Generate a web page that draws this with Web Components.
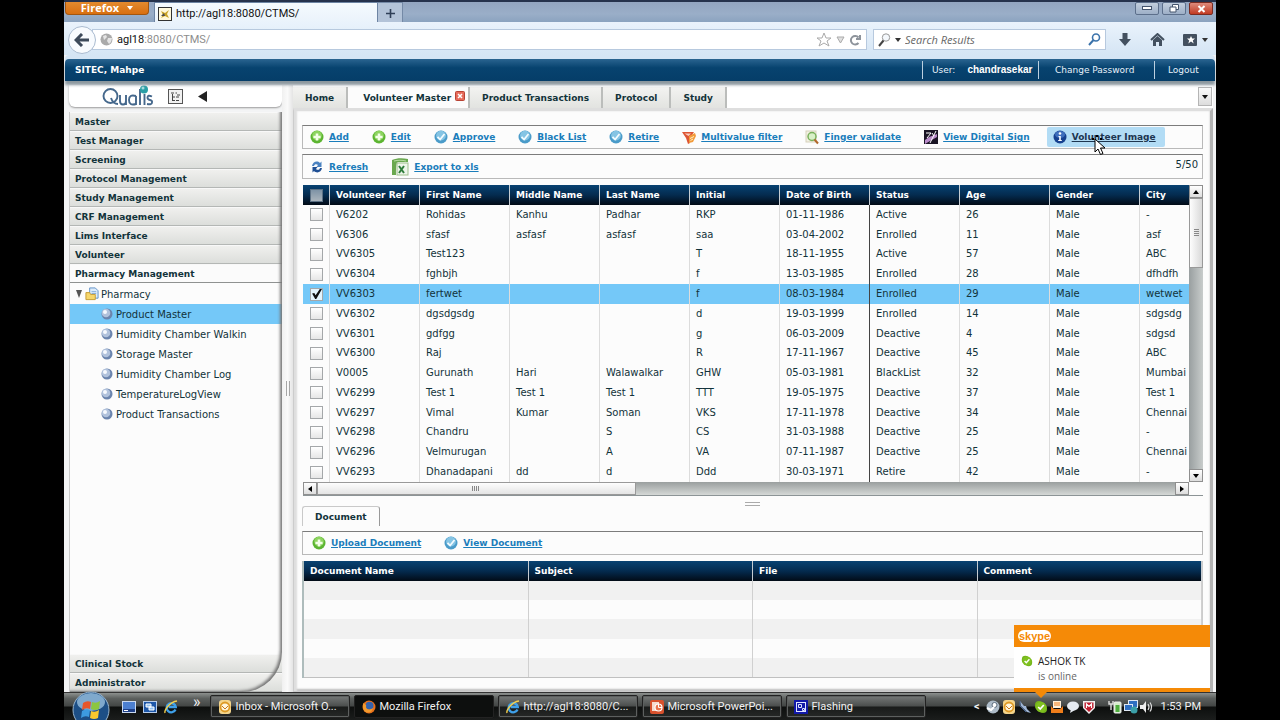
<!DOCTYPE html>
<html lang="en">
<head>
<meta charset="utf-8">
<title>CTMS - Volunteer Master</title>
<style>
  html, body { height: 100%; margin: 0; }
  body { background: #000; font-family: "DejaVu Sans", Verdana, sans-serif; font-size: 10px; color: #12333a; overflow: hidden; }
</style>
</head>
<body>
<desktop-screen></desktop-screen>
<script>
const ICONS = {
  add: `<svg viewBox="0 0 14 14"><circle cx="7" cy="7" r="6.5" fill="#5cb531"/><circle cx="7" cy="5.500" r="4.800" fill="#8dd45f"/><path d="M5.700 3.500h2.600v2.300h2.300v2.500H8.300v2.300H5.700V8.300H3.400V5.800h2.300z" fill="#f4ffe9"/></svg>`,
  check: `<svg viewBox="0 0 14 14"><circle cx="7" cy="7" r="6.500" fill="#4a9bc9"/><circle cx="7" cy="5.600" r="4.900" fill="#85c4e4"/><path d="M3.500 6.800l2.600 2.700L10.500 4" fill="none" stroke="#f3fbff" stroke-width="1.800"/></svg>`,
  filter: `<svg viewBox="0 0 14 14"><path d="M0 2h12L8 8v5l-2 1-2-6z" fill="#dd5534"/><path d="M2.500 3.500h6.500L6.500 6z" fill="#fbd0c2"/><path d="M7 6l6-3 1 3-3 6-4 1z" fill="#f29a3a"/><path d="M8 8.500l4-2M8.500 10.500l2.500-1.500" stroke="#fff0c8"/></svg>`,
  finger: `<svg viewBox="0 0 14 14"><rect x="1" y="1" width="10" height="11" fill="#f2f0e2" stroke="#d6d1bb"/><circle cx="7" cy="6.500" r="4" fill="#d9f0c7" stroke="#7ab15c" stroke-width="1.500"/><path d="M9.500 9.500l3.500 4" stroke="#b1682c" stroke-width="2"/></svg>`,
  sign: `<svg viewBox="0 0 14 14"><rect width="14" height="14" fill="#1a1424"/><path d="M1 10l4-3 8-3v3L6 11l-5 3z" fill="#b98bc9"/><path d="M2 3h5L3 8M8 3l2 3M12 1L6 13" stroke="#fff" fill="none"/></svg>`,
  info: `<svg viewBox="0 0 14 14"><circle cx="7" cy="7" r="6.500" fill="#17418f"/><ellipse cx="7" cy="4.500" rx="5" ry="3.500" fill="#3f6fbd"/><circle cx="7" cy="3.500" r="1.300" fill="#fff"/><path d="M5.500 6h2.300v4h1v1h-3.600v-1h1V7h-.7z" fill="#fff"/></svg>`,
  refresh: `<svg viewBox="0 0 14 14"><path d="M2 6c.5-4 5-6 8-3l1.500-1.500V7H6.500L8 5C6.500 3.500 4.500 4 4 6z" fill="#4b82c0"/><path d="M12 8c-.5 4-5 6-8 3l-1.500 1.500V7H7.500L6 9c1.500 1.500 3.500 1 4-1z" fill="#1f4f94"/></svg>`,
  excel: `<svg viewBox="0 0 18 18"><path d="M1 2C6 0 11 0 17 1v3H7C5 5 5 9 5 17H1z" fill="#6aa84f"/><path d="M3 3c4-1 8-1 12 0" stroke="#b5dca0" fill="none"/><rect x="6" y="5" width="11" height="12" fill="#eef5ea" stroke="#9dbf8c"/><path d="M8 8l5 7M13 8l-5 7" stroke="#2f7d3b" stroke-width="2"/></svg>`,
  folder: `<svg viewBox="0 0 15 15"><path d="M5 1h6l3 3v8H5z" fill="#dcebfa" stroke="#5c8fc7"/><path d="M7 5h5M7 7h5" stroke="#7fa8d6"/><path d="M1 6h4l1 2h5v5.500H1z" fill="#f6d66b" stroke="#c49a32"/></svg>`,
  ball: `<svg viewBox="0 0 12 12"><circle cx="6" cy="6" r="5.500" fill="#6b84ad"/><circle cx="5" cy="5" r="4.300" fill="#b1c2dc"/><circle cx="4" cy="4" r="2" fill="#f6f9fe"/></svg>`,
  ie: `<svg viewBox="0 0 14 14"><path d="M11.500 9.500A4.600 4.600 0 1 1 11.800 7H4.500" fill="none" stroke="#3fa1ea" stroke-width="2.300"/><path d="M1 13C0 10 6 2 13 1" fill="none" stroke="#f3cf4e" stroke-width="1.400"/></svg>`,
  outlook: `<svg viewBox="0 0 14 14"><rect x="1" y="0" width="12" height="14" rx="3" fill="#f4d58c"/><circle cx="7" cy="7" r="4.500" fill="#fff6dd" stroke="#de9a25" stroke-width="1.800"/><path d="M4 6l3 3 3-3" stroke="#c8791b" fill="none"/></svg>`,
  firefox: `<svg viewBox="0 0 14 14"><circle cx="7" cy="7" r="6.500" fill="#e8701a"/><circle cx="7.500" cy="5.800" r="4" fill="#3463ad"/><path d="M1 3c2 1 4 2 3 4 0 3 5 3 7 1-1 6-9 6-10 0z" fill="#f29a2e"/></svg>`,
  ppt: `<svg viewBox="0 0 14 14"><rect width="14" height="14" rx="2" fill="#d8512d"/><rect x="2" y="2" width="7" height="9" fill="#f7d9cd"/><circle cx="8.500" cy="7.500" r="3.500" fill="#e9744f" stroke="#fff" stroke-width="1.200"/><path d="M8.500 4v3.500H12" stroke="#fff" fill="none"/></svg>`,
  flash: `<svg viewBox="0 0 14 14"><rect width="14" height="14" fill="#1118a8"/><rect x="2.500" y="2.500" width="9" height="9" fill="none" stroke="#dfe3ff"/><path d="M4.500 4.500h3v3h-3zM8.500 8.500h2v2h-2z" fill="none" stroke="#dfe3ff"/></svg>`,
  desktop: `<svg viewBox="0 0 14 14"><rect x=".5" y="1.500" width="13" height="11" fill="#4c7fd0" stroke="#c9d8ee"/><path d="M1 9h12v3H1z" fill="#1e3f87"/><path d="M2 10.500h4" stroke="#fff"/></svg>`,
  windows: `<svg viewBox="0 0 14 14"><rect x=".5" y="1.500" width="13" height="11" fill="#1d57a8" stroke="#b8cdea"/><path d="M3 4h5v3H3zM6 7h5v3H6z" fill="#8fc0f2" stroke="#fff"/></svg>`,
  steam: `<svg viewBox="0 0 14 14"><circle cx="7" cy="7" r="6.500" fill="#aebcc9"/><circle cx="8.500" cy="5" r="2.500" fill="#fff" stroke="#5c6c7c"/><path d="M1 8l4 2 3-3" stroke="#fff" stroke-width="2" fill="none"/></svg>`,
  plug: `<svg viewBox="0 0 14 14"><path d="M2 1l4 5 2 0 1 3 4 4-4-1-3-3-3-3z" fill="#9fb6d6"/><path d="M2 1v5l6 6" stroke="#46638e" fill="none"/></svg>`,
  skype: `<svg viewBox="0 0 14 14"><rect x="1" y="1" width="8" height="9" rx="4" fill="#74b41c"/><rect x="5" y="4" width="8" height="9" rx="4" fill="#74b41c"/><circle cx="7" cy="7" r="5.300" fill="#7fc01f"/><path d="M4.200 7l2 2 3.600-4" stroke="#fff" stroke-width="1.700" fill="none"/></svg>`,
  mail: `<svg viewBox="0 0 14 14"><path d="M3 1h8v7H3z" fill="#fff1dc"/><path d="M1 6l3 3h6l3-3v7H1z" fill="#ef7d1a"/><path d="M4 3h6M4 5h6" stroke="#ef7d1a"/></svg>`,
  bubble: `<svg viewBox="0 0 14 14"><ellipse cx="7" cy="6" rx="6" ry="4.500" fill="#e6ebf1"/><path d="M5 9l-1 4 5-3z" fill="#e6ebf1"/></svg>`,
  shield: `<svg viewBox="0 0 14 14"><path d="M1 1h12v7l-6 6-6-6z" fill="#f1f1f1"/><path d="M2.500 2.500h9v5L7 12 2.500 7.500z" fill="#c01d2e"/><path d="M4.500 8V4L7 6.500 9.500 4v4" stroke="#fff" fill="none" stroke-width="1.200"/></svg>`,
  battery: `<svg viewBox="0 0 14 14"><rect x="6" y="2" width="7" height="11" rx="1" fill="#d6eccd" stroke="#eee"/><rect x="7.500" y="5" width="4" height="7" fill="#4fae3f"/><path d="M1 1v3h4V1M3 4v6" stroke="#ddd" fill="none" stroke-width="1.400"/></svg>`,
  network: `<svg viewBox="0 0 14 14"><rect x="4.500" y=".5" width="9" height="7" fill="#2f6fc2" stroke="#dfe8f4"/><rect x=".5" y="4.500" width="8" height="6" fill="#2f6fc2" stroke="#dfe8f4"/><circle cx="10" cy="10" r="3.500" fill="#3ba0a8"/></svg>`,
  sound: `<svg viewBox="0 0 14 14"><path d="M0 5h3l3-4v12L3 9H0z" fill="#eee"/><path d="M8 4q2 3 0 6M10 2.500q3 4.500 0 9" stroke="#ddd" fill="none" stroke-width="1.200"/></svg>`,
  cursor: `<svg viewBox="0 0 14 20"><path d="M1 3v13l3-3 2.500 5.500 2.500-1L6.500 12H11z" fill="#fff" stroke="#000"/><path d="M2-1h2v2H2zM-2 2h2v2h-2zM6 2h2v2H6z" fill="#000"/></svg>`
};
const BASE = `<style>*{box-sizing:border-box} svg{display:block} a{color:inherit} button,input{font:inherit;color:inherit;margin:0;padding:0;border:0;background:none}</style>`;

function define(name, html) {
  customElements.define(name, class extends HTMLElement {
    constructor() {
      super();
      this.attachShadow({ mode: "open" }).innerHTML = BASE + html;
    }
  });
}

customElements.define("ui-icon", class extends HTMLElement {
  connectedCallback() {
    if (this.shadowRoot) return;
    this.attachShadow({ mode: "open" }).innerHTML =
      `<style>:host{display:block;flex:none;width:14px;height:14px} svg{display:block;width:100%;height:100%;overflow:visible}</style>${ICONS[this.getAttribute("name")] || ""}`;
  }
});

define("tool-link", `
<style>
  :host { display: block; position: relative; font-weight: bold; font-size: 9px; color: #1a7dbb; white-space: nowrap; }
  a { display: flex; align-items: center; gap: 5px; height: 20px; padding: 0 6px; text-decoration: none; border-radius: 2px; }
  span { text-decoration: underline; text-underline-offset: 1px; }
  :host([hovered]) a { background: #b2dcf5; color: #1c3550; padding-right: 9px; }
</style>
<a href="#"><slot name="icon"></slot><span><slot></slot></span></a><slot name="over"></slot>`);

define("tool-bar", `
<style>
  :host { display: flex; align-items: center; gap: 11px; height: 24px; padding: 0 4px 0 1px; background: #fcfcfc; border: 1px solid #b9b9b9; border-top-color: #7c7c7c; box-sizing: border-box; flex: none; }
</style><slot></slot>`);

define("browser-titlebar", `
<style>
  :host { display: flex; align-items: flex-start; height: 22px; flex: none; background: linear-gradient(#93a5c0, #9aaec8 60%, #8ba3bf); border-top: 2px solid #26324c; font-family: "Open Sans", sans-serif; font-size: 11px; color: #111; }
  .fx { width: 84px; height: 13px; margin-left: 1px; background: linear-gradient(#e38a2f, #d96f10); border: 1px solid #a3560f; border-top: 0; border-radius: 0 0 4px 4px; color: #fff; font-weight: bold; line-height: 10px; display: flex; justify-content: center; align-items: center; gap: 8px; }
  .fx i { border: 3px solid transparent; border-top: 4px solid #fff; border-bottom: 0; }
  .tab { display: flex; align-items: center; gap: 4px; width: 224px; height: 22px; margin-left: 5px; padding: 0 3px; background: linear-gradient(#f5fafe, #e9f2fb); border: 1px solid #6d84a3; border-bottom: 0; font-family: Roboto, sans-serif; }
  .plus { width: 25px; height: 22px; background: #b3c3d8; border: 1px solid #7489a6; border-left: 0; display: grid; place-items: center; }
  .win { margin-left: auto; display: flex; gap: 3px; margin-right: 3px; }
  .win button { width: 24px; height: 13px; border: 1px solid #5c6f8b; border-radius: 2px; background: linear-gradient(#c2cedd, #9dafc7); display: grid; place-items: center; }
  .win .x { background: linear-gradient(#dd8b7c, #c23a22); border-color: #7a2c22; }
</style>
<button class="fx">Firefox<i></i></button>
<div class="tab"><svg width="14" height="14" viewBox="0 0 14 14"><rect x=".5" y=".5" width="13" height="13" fill="#fff8dc" stroke="#333"/><path d="M3 4l4 2 4-3-2 4 2 4-4-2-4 2 2-3z" fill="#c9a227"/><path d="M3 9l3-3 1 3z" fill="#4c4c4c"/></svg>http://agl18:8080/CTMS/</div>
<button class="plus" aria-label="New tab"><svg width="9" height="9"><path d="M4.500 0v9M0 4.500h9" stroke="#2f3f57" stroke-width="1.600"/></svg></button>
<div class="win">
  <button aria-label="Minimize"><svg width="10" height="5"><rect x=".5" y=".5" width="9" height="3" fill="#fff" stroke="#44546d"/></svg></button>
  <button aria-label="Restore"><svg width="11" height="9"><path d="M3.500 .5h6v5h-6z" fill="#fff" stroke="#44546d"/><path d="M1 3h6v5H1z" fill="#fff" stroke="#44546d"/></svg></button>
  <button class="x" aria-label="Close"><svg width="9" height="8"><path d="M1.500 1l6 6M7.500 1l-6 6" stroke="#fff" stroke-width="2"/></svg></button>
</div>`);

define("browser-nav", `
<style>
  :host { display: flex; align-items: center; height: 33px; flex: none; padding: 2px 8px 0 4px; background: linear-gradient(#eaf3fc, #d5e5f4); font-family: "Open Sans", sans-serif; font-size: 11px; }
  .back { width: 28px; height: 28px; border-radius: 50%; background: #f8fbfe; border: 1px solid #aabbd0; display: grid; place-items: center; position: relative; flex: none; }
  .box { display: flex; align-items: center; height: 21px; background: #fff; border: 1px solid #b7c9de; }
  .url { flex: 1; margin-left: -4px; padding: 0 5px 0 7px; gap: 4px; }
  .url label { display: flex; flex: 1; color: #8d8d8d; font-family: Roboto, sans-serif; }
  .url b { font-weight: normal; color: #111; }
  .search { width: 233px; margin-left: 6px; padding: 0 4px; gap: 4px; }
  input { flex: 1; min-width: 0; font-style: italic; color: #666; outline: none; }
  input::placeholder { color: #666; opacity: 1; }
  .tri { border: 3px solid transparent; border-top: 4px solid #333; border-bottom: 0; }
  .acts { display: flex; align-items: center; margin-left: 12px; gap: 18px; }
  .acts span { display: flex; align-items: center; gap: 4px; }
</style>
<button class="back" aria-label="Back"><svg width="16" height="14"><path d="M8 1L2 7l6 6M2 7h13" stroke="#3d4a5a" stroke-width="3" fill="none"/></svg></button>
<div class="box url">
  <svg width="13" height="13"><circle cx="6.500" cy="6.500" r="6" fill="#aaa"/><path d="M3 3l3-1 1 2-3 3zM8 5l4 0-1 4-2 2-2-3z" fill="#e5e5e5"/></svg>
  <label><b>agl18</b>:8080/CTMS/</label>
  <svg width="16" height="15" viewBox="0 0 16 15"><path d="M8 1l2 5h5l-4 3 2 5-5-3-5 3 2-5-4-3h5z" fill="#fff" stroke="#aaa"/></svg>
  <svg width="9" height="8"><path d="M1 1h7L4.500 7z" fill="#e0e0e0" stroke="#aaa"/></svg>
  <svg width="12" height="12"><path d="M9.500 9A4.300 4.300 0 1 1 9.500 3.500M11 1v4H7" fill="none" stroke="#8d939b" stroke-width="2"/></svg>
</div>
<div class="box search">
  <svg width="13" height="14"><circle cx="8" cy="4.500" r="3.700" fill="#f4f8fc" stroke="#999"/><path d="M5.500 7.500L1 13" stroke="#444" stroke-width="2"/></svg><i class="tri"></i>
  <input type="text" aria-label="Search" placeholder="Search Results">
  <svg width="13" height="13"><circle cx="8" cy="4.500" r="3.500" fill="none" stroke="#3b73ab" stroke-width="1.600"/><path d="M5.500 7L1 12" stroke="#3b73ab" stroke-width="2"/></svg>
</div>
<div class="acts">
  <svg width="14" height="14"><path d="M4.500 0h5v6H13L7 13 1 6h3.500z" fill="#43505f"/></svg>
  <svg width="15" height="13"><path d="M1 7l6.500-6L14 7" stroke="#43505f" stroke-width="2" fill="none"/><path d="M3 7l4.500-4L12 7v6H9V9H6v4H3z" fill="#43505f"/></svg>
  <span><svg width="15" height="13"><rect y="1" width="14" height="12" rx="1" fill="#43505f"/><path d="M8 3l1.200 2.600H12L9.800 7.400l.9 3L8 8.600l-2.700 1.800.9-3L4 5.600h2.800z" fill="#fff"/></svg><i class="tri"></i></span>
</div>`);

define("app-header", `
<style>
  :host { display: flex; align-items: center; height: 22px; flex: none; margin: 4px 1px 0; background: linear-gradient(#2a6490, #07436f 40%, #053d68); border-radius: 4px 4px 0 0; color: #e6f1fa; font-size: 9px; padding-left: 10px; box-shadow: 0 4px 3px #8b979e, 0 -4px 0 #d5e5f4; position: relative; }
  b { color: #fff; }
  nav { margin-left: auto; display: flex; }
  nav > * { height: 18px; line-height: 18px; border-left: 1px solid #bcd0e0; text-decoration: none; }
  .u { width: 116px; padding-left: 9px; display: flex; gap: 12px; }
  .u b { font-family: "Liberation Sans", sans-serif; font-size: 10px; }
  .p { width: 116px; padding-left: 16px; } .l { width: 61px; padding-left: 13px; }
</style>
<b>SITEC, Mahpe</b>
<nav><span class="u">User: <b>chandrasekar</b></span><a class="p" href="#">Change Password</a><a class="l" href="#">Logout</a></nav>`);

const TREE = ["Product Master", "Humidity Chamber Walkin", "Storage Master", "Humidity Chamber Log", "TemperatureLogView", "Product Transactions"];
const heads = list => list.map(t => `<button class="h${t === "Pharmacy Management" ? " open" : ""}">${t}</button>`).join("");
define("side-menu", `
<style>
  :host { display: flex; flex-direction: column; width: 213px; flex: none; gap: 5px; }
  .logo { height: 22px; flex: none; display: flex; align-items: center; gap: 14px; padding-left: 33px; background: #fff; border-radius: 0 0 6px 6px; box-shadow: 0 1px 2px #9a9a9a; }
  .acc { flex: 1; display: flex; flex-direction: column; position: relative; background: #fcfcfc; min-height: 0; border-left: 1px solid #c9c9c9; }
  .acc::after { content: ""; position: absolute; inset: 0; border-radius: 0 0 40px 0; box-shadow: inset -3px -2px 3px -1px #777; pointer-events: none; }
  .h { height: 19px; flex: none; text-align: left; padding-left: 5px; font-size: 9px; font-weight: bold; background: linear-gradient(#f0f0ee, #dcdedb); border-top: 1px solid #f8f8f8; border-bottom: 1px solid #b4b7b5; }
  .open { background: #fbfbfb; border-bottom-color: #8f9291; }
  .tree { flex: 1; padding-top: 1px; min-height: 0; }
  .tree ul { margin: 0; padding: 0; list-style: none; }
  .row { display: flex; align-items: center; height: 20px; padding-left: 5px; gap: 2px; }
  ul a { display: flex; align-items: center; height: 20px; gap: 3px; padding-left: 31px; text-decoration: none; }
  ul a ui-icon { width: 12px; height: 12px; }
  ul a[aria-current] { background: #74c8f8; }
</style>
<div class="logo">
  <svg width="52" height="22" viewBox="0 0 52 22" role="img" aria-label="Qualis"><g fill="none" stroke="#45688c" stroke-width="1.900"><ellipse cx="8.500" cy="11" rx="7" ry="7"/><path d="M9 13q2 6 7 6M18 10v6q0 3.500 3 3.500t3-3.500V10v10M34 11q-7-2-7 4t7 4v-8v9M38 4v16M42.500 9v11M50 11.500q-4.500-2-4.500 1 0 2 2.500 2.500t2 2.500q0 2.500-5 1.500"/></g><circle cx="42" cy="4.500" r="4" fill="#2a9fa6"/><circle cx="41" cy="3" r="1.500" fill="#a5dcdc"/></svg>
  <svg width="15" height="15"><rect x=".5" y=".5" width="14" height="14" fill="#f1f1f1" stroke="#555"/><path d="M3 4h3M4.500 5v7M5 8h2M5 11.500h2M7.500 4H9M8 8h3M8 11.500h3M9 6h3" stroke="#444"/></svg>
  <svg width="10" height="11"><path d="M10 0v11L1 5.500z" fill="#222"/></svg>
</div>
<div class="acc">
  ${heads(["Master", "Test Manager", "Screening", "Protocol Management", "Study Management", "CRF Management", "Lims Interface", "Volunteer", "Pharmacy Management"])}
  <div class="tree">
    <div class="row"><svg width="8" height="8"><path d="M1 0h6L4 8z" fill="#555"/></svg><ui-icon name="folder"></ui-icon><span>Pharmacy</span></div>
    <ul>${TREE.map((t, i) => `<li><a href="#"${i ? "" : ' aria-current="page"'}><ui-icon name="ball"></ui-icon>${t}</a></li>`).join("")}</ul>
  </div>
  ${heads(["Clinical Stock", "Administrator"])}
</div>`);

define("tab-strip", `
<style>
  :host { display: flex; height: 23px; flex: none; padding-top: 2px; box-sizing: border-box; font-size: 9px; font-weight: bold; background: #fff; }
  button.t { padding: 0 12px; background: linear-gradient(#f3f3f1, #e2e3e0); border-right: 2px solid #bbbdbb; display: flex; align-items: center; }
  button.on { background: #fcfcfc; padding: 0 3px 0 15px; gap: 4px; }
  .more { margin: 0 1px 2px auto; width: 14px; background: linear-gradient(#fafafa, #ddd); border: 1px solid #b5b5b5; display: grid; place-items: center; }
  .more::after { content: ""; border: 3px solid transparent; border-top: 4px solid #111; border-bottom: 0; }
</style>
<button class="t">Home</button>
<button class="t on">Volunteer Master<svg width="10" height="14"><rect x=".5" y=".5" width="9" height="9" rx="1" fill="#e66a5a" stroke="#b84334"/><path d="M3 3l4 4M7 3L3 7" stroke="#fff" stroke-width="1.500"/></svg></button>
<button class="t">Product Transactions</button><button class="t">Protocol</button><button class="t">Study</button>
<button class="more" aria-label="All tabs"></button>`);

const COLS = ["Volunteer Ref", "First Name", "Middle Name", "Last Name", "Initial", "Date of Birth", "Status", "Age", "Gender", "City"];
const ROWS = `V6202|Rohidas|Kanhu|Padhar|RKP|01-11-1986|Active|26|Male|-
V6306|sfasf|asfasf|asfasf|saa|03-04-2002|Enrolled|11|Male|asf
VV6305|Test123|||T|18-11-1955|Active|57|Male|ABC
VV6304|fghbjh|||f|13-03-1985|Enrolled|28|Male|dfhdfh
VV6303|fertwet|||f|08-03-1984|Enrolled|29|Male|wetwet
VV6302|dgsdgsdg|||d|19-03-1999|Enrolled|14|Male|sdgsdg
VV6301|gdfgg|||g|06-03-2009|Deactive|4|Male|sdgsd
VV6300|Raj|||R|17-11-1967|Deactive|45|Male|ABC
V0005|Gurunath|Hari|Walawalkar|GHW|05-03-1981|BlackList|32|Male|Mumbai
VV6299|Test 1|Test 1|Test 1|TTT|19-05-1975|Deactive|37|Male|Test 1
VV6297|Vimal|Kumar|Soman|VKS|17-11-1978|Deactive|34|Male|Chennai
VV6298|Chandru||S|CS|31-03-1988|Deactive|25|Male|-
VV6296|Velmurugan||A|VA|07-11-1987|Deactive|25|Male|Chennai
VV6293|Dhanadapani|dd|d|Ddd|30-03-1971|Retire|42|Male|-`.split("\n").map(r => r.split("|"));
define("data-grid", `
<style>
  :host { display: grid; grid-template: 1fr 13px / 1fr 14px; flex: 1; min-height: 0; margin: 6px 0 0 1px; border-bottom: 1px solid #8c9496; }
  .view { overflow: hidden; min-height: 0; min-width: 0; }
  table { table-layout: fixed; width: 927px; height: 100%; border-spacing: 0; }
  col { width: 90px; } col.c { width: 27px; }
  th { height: 20px; padding: 0 0 0 6px; text-align: left; font-size: 9px; color: #fff; background: linear-gradient(#084272, #042b4f 50%, #020b16); border-right: 1px solid #c5ccd2; }
  td { padding: 0 0 0 6px; border-right: 1px solid #dcdcdc; background: #fcfcfc; line-height: 12px; white-space: nowrap; }
  td:nth-child(7) { border-right-color: #444; }
  td:first-child, th:first-child { padding: 0 0 0 7px; }
  tr.sel td { background: #74c8f8; }
  input { appearance: none; display: block; width: 13px; height: 13px; border: 1px solid #a4a7a9; background: linear-gradient(#fff, #e6e6e6); }
  th input { background: linear-gradient(#7e93a6, #aab4bc); border-color: #5c7185; }
  input:checked { background: #e4f4fd; }
  input:checked::after { content: ""; display: block; height: 11px; background: #111; clip-path: polygon(10% 45%, 30% 40%, 42% 62%, 80% 5%, 100% 5%, 48% 95%, 38% 95%); }
  .vs, .hs { display: flex; background: #b4b9ba; }
  .vs { flex-direction: column; background: linear-gradient(90deg, #999fa0, #c8cccb); }
  .hs { background: linear-gradient(#9a9f9f, #d5d8d6); }
  .b { background: linear-gradient(#fff, #ddd); border: 1px solid #8f8f8f; display: grid; place-items: center; flex: none; width: 14px; height: 13px; }
  .th { background: linear-gradient(90deg, #fdfdfd, #d9d9d9); border: 1px solid #999; height: 70px; display: grid; place-items: center; }
  .hs .th { background: linear-gradient(#fdfdfd, #e4e4e4); height: 13px; width: 36%; }
  .sp { flex: 1; }
</style>
<div class="view"><table>
  <colgroup><col class="c">${"<col>".repeat(10)}</colgroup>
  <thead><tr><th><input type="checkbox" aria-label="Select all"></th>${COLS.map(c => `<th>${c}</th>`).join("")}</tr></thead>
  <tbody>${ROWS.map(r => `<tr${r[0] === "VV6303" ? ' class="sel"' : ""}><td><input type="checkbox" aria-label="Select ${r[0]}"${r[0] === "VV6303" ? " checked" : ""}></td>${r.map(c => `<td>${c}</td>`).join("")}</tr>`).join("")}</tbody>
</table></div>
<div class="vs"><button class="b" aria-label="Scroll up"><svg width="6" height="4"><path d="M0 4l3-4 3 4z"/></svg></button><div class="th"><svg width="5" height="8"><path d="M0 .5h5M0 2.500h5M0 4.500h5M0 6.500h5" stroke="#888"/></svg></div><div class="sp"></div><button class="b" aria-label="Scroll down"><svg width="6" height="4"><path d="M0 0h6L3 4z"/></svg></button></div>
<div class="hs"><button class="b" aria-label="Scroll left"><svg width="4" height="6"><path d="M4 0v6L0 3z"/></svg></button><div class="th"><svg width="8" height="5"><path d="M.5 0v5M2.500 0v5M4.500 0v5M6.500 0v5" stroke="#888"/></svg></div><div class="sp"></div><button class="b" aria-label="Scroll right"><svg width="4" height="6"><path d="M0 0v6l4-3z"/></svg></button></div>`);

define("doc-panel", `
<style>
  :host { display: block; flex: none; }
  .grip { height: 10px; display: grid; place-items: end center; }
  .grip i { width: 15px; height: 4px; border: 1px solid #aaa; border-width: 1px 0; }
  .tab { display: block; height: 20px; padding: 0 12px; font-size: 9px; font-weight: bold; background: #fcfcfc; border: 1px solid #c9c9c9; border-bottom: 0; border-right-color: #999; border-radius: 3px 3px 0 0; margin-bottom: 5px; }
  tool-bar { padding-left: 3px; }
  .w { margin-top: 6px; border-left: 2px solid #aebcbc; border-right: 1px solid #ccc; }
  table { width: 100%; height: 117px; table-layout: fixed; border-spacing: 0; border-bottom: 1px solid #c0c0c0; }
  th { height: 20px; padding: 0 0 0 6px; text-align: left; font-size: 9px; color: #fff; background: linear-gradient(#084272, #042b4f 50%, #020b16); border-right: 1px solid #c5ccd2; }
  td { padding: 0; border-right: 1px solid #d0d0d0; background: #fcfcfc; }
  tr:nth-child(odd) td { background: #f1f1f1; }
</style>
<div class="grip"><i></i></div>
<button class="tab">Document</button>
<tool-bar><tool-link><ui-icon slot="icon" name="add"></ui-icon>Upload Document</tool-link><tool-link><ui-icon slot="icon" name="check"></ui-icon>View Document</tool-link></tool-bar>
<div class="w"><table><thead><tr><th>Document Name</th><th>Subject</th><th>File</th><th>Comment</th></tr></thead>
<tbody>${("<tr>" + "<td></td>".repeat(4) + "</tr>").repeat(5)}</tbody></table></div>`);

const tool = (icon, text) => `<tool-link><ui-icon slot="icon" name="${icon}"></ui-icon>${text}</tool-link>`;
define("volunteer-page", `
<style>
  :host { display: flex; flex-direction: column; flex: 1; min-width: 0; }
  .body { flex: 1; min-height: 0; display: flex; flex-direction: column; padding: 14px 7px 13px 8px; background: #fcfcfc; border: 1px solid #ccc; border-top: 3px solid #dedede; border-right: 3px solid #b3b3b3; box-shadow: inset 3px 0 2px #dedede, inset 0 -2px 2px #bbb; }
  .second { margin-top: 5px; height: 25px; }
  .xls { width: 18px; height: 18px; }
  .count { margin: 0 0 4px auto; }
  .cur { position: absolute; left: 47px; top: 9px; width: 14px; height: 20px; }
</style>
<tab-strip></tab-strip>
<div class="body">
  <tool-bar>${tool("add", "Add")}${tool("add", "Edit")}${tool("check", "Approve")}${tool("check", "Black List")}${tool("check", "Retire")}${tool("filter", "Multivalue filter")}${tool("finger", "Finger validate")}${tool("sign", "View Digital Sign")}<tool-link hovered><ui-icon slot="icon" name="info"></ui-icon>Volunteer Image<ui-icon slot="over" class="cur" name="cursor"></ui-icon></tool-link></tool-bar>
  <tool-bar class="second">${tool("refresh", "Refresh")}<tool-link><ui-icon slot="icon" class="xls" name="excel"></ui-icon>Export to xls</tool-link><span class="count">5/50</span></tool-bar>
  <data-grid></data-grid>
  <doc-panel></doc-panel>
</div>`);

define("skype-toast", `
<style>
  :host { position: absolute; right: 6px; bottom: 28px; width: 196px; height: 67px; background: #fff; font-family: "Open Sans", sans-serif; font-size: 10px; border-bottom: 4px solid #f58a07; display: flex; flex-direction: column; box-sizing: border-box; }
  :host::after { content: ""; position: absolute; left: 21px; top: 100%; border: 6px solid transparent; border-top-color: #f58a07; border-bottom: 0; margin-top: 4px; }
  header { height: 22px; background: #f58a07; flex: none; display: flex; align-items: center; padding-left: 4px; }
  .logo { font-family: "Liberation Sans", sans-serif; font-weight: bold; font-size: 11px; line-height: 12px; color: #f58a07; background: #fff; border-radius: 6px; padding: 0 1px; }
  .m { display: grid; grid-template-columns: 12px 1fr; gap: 0 5px; padding: 7px 0 0 7px; line-height: 15px; color: #666; }
  .m b { font-weight: normal; color: #222; }
  .m span { grid-column: 2; }
  ui-icon { width: 12px; }
</style>
<header><span class="logo">skype</span></header>
<div class="m"><ui-icon name="skype"></ui-icon><b>ASHOK TK</b><span>is online</span></div>`);

const task = (icon, text, on) => `<button class="t${on ? " on" : ""}"><ui-icon name="${icon}"></ui-icon>${text}</button>`;
define("task-bar", `
<style>
  :host { display: flex; align-items: center; height: 28px; box-sizing: border-box; flex: none; padding-left: 8px; background: linear-gradient(#8c908e, #5c605e 20%, #434645 48%, #0d0f0e 52%, #1b1d1c); border-top: 1px solid #333; font-family: Roboto, sans-serif; font-size: 11px; color: #f2f2f2; }
  .start { width: 38px; height: 27px; position: relative; flex: none; }
  .start svg { position: absolute; left: 0; bottom: -9px; overflow: visible; }
  .q { display: flex; gap: 7px; margin-left: 12px; }
  .mo { margin: 0 9px 10px 15px; font-size: 16px; line-height: 14px; }
  .tasks { display: flex; gap: 4px; flex: 0 1 716px; }
  .t { flex: 1 1 0; min-width: 0; height: 23px; display: flex; align-items: center; gap: 4px; padding-left: 7px; white-space: nowrap; border: 1px solid #222; box-shadow: inset 0 0 0 1px #5d605f; border-radius: 2px; background: linear-gradient(#767978, #4b4e4d 48%, #191b1a 52%, #262827); }
  .on { background: #0d0f0e; box-shadow: none; }
  .tray { margin-left: auto; display: flex; align-items: center; gap: 2px; }
  .lt { margin-right: 4px; font-weight: bold; }
  .g { width: 8px; }
  time { margin: 0 15px 0 5px; }
</style>
<button class="start" aria-label="Start"><svg width="38" height="38" viewBox="0 0 38 38"><circle cx="19" cy="19" r="18" fill="#1d4f86" stroke="#9ab6ce"/><ellipse cx="19" cy="11" rx="14" ry="9" fill="#7fa9cd"/><path d="M11 12q4-3 8-1l-1 7q-4-2-8 1z" fill="#e8562a"/><path d="M20 11q4 2 8-1l-1 8q-4 2-8 0z" fill="#8cc63f"/><path d="M10 20q4-3 8-1l-1 7q-4-2-8 1z" fill="#3d9be0"/><path d="M19 20q4 2 8-1l-1 8q-4 2-8 0z" fill="#fbc92e"/></svg></button>
<div class="q"><ui-icon name="desktop"></ui-icon><ui-icon name="windows"></ui-icon><ui-icon name="ie"></ui-icon></div>
<span class="mo">»</span>
<div class="tasks">${task("outlook", "Inbox - Microsoft O...")}${task("firefox", "Mozilla Firefox", 1)}${task("ie", "http://agl18:8080/C...")}${task("ppt", "Microsoft PowerPoi...")}${task("flash", "Flashing")}</div>
<div class="tray"><span class="lt">&lt;</span>${["steam", "outlook", "plug", "skype", "mail", "bubble", "shield"].map(n => `<ui-icon name="${n}"></ui-icon>`).join("")}<i class="g"></i>${["battery", "network", "sound"].map(n => `<ui-icon name="${n}"></ui-icon>`).join("")}<time>1:53 PM</time></div>`);

define("desktop-screen", `
<style>
  :host { display: flex; flex-direction: column; height: 100vh; margin: 0 5%; position: relative; background: #f3f4f5; overflow: hidden; }
  main { flex: 1; min-height: 0; display: flex; padding: 4px 3px 0 5px; }
  .split { width: 11px; flex: none; display: grid; place-items: center; background: linear-gradient(90deg, #f0f0f0, #fafafa, #e4e4e4); }
  .split i { width: 4px; height: 15px; border: 1px solid #a5a5a5; border-width: 0 1px; }
</style>
<browser-titlebar></browser-titlebar><browser-nav></browser-nav><app-header></app-header>
<main><side-menu></side-menu><div class="split"><i></i></div><volunteer-page></volunteer-page></main>
<task-bar></task-bar><skype-toast></skype-toast>`);
</script>
</body>
</html>
